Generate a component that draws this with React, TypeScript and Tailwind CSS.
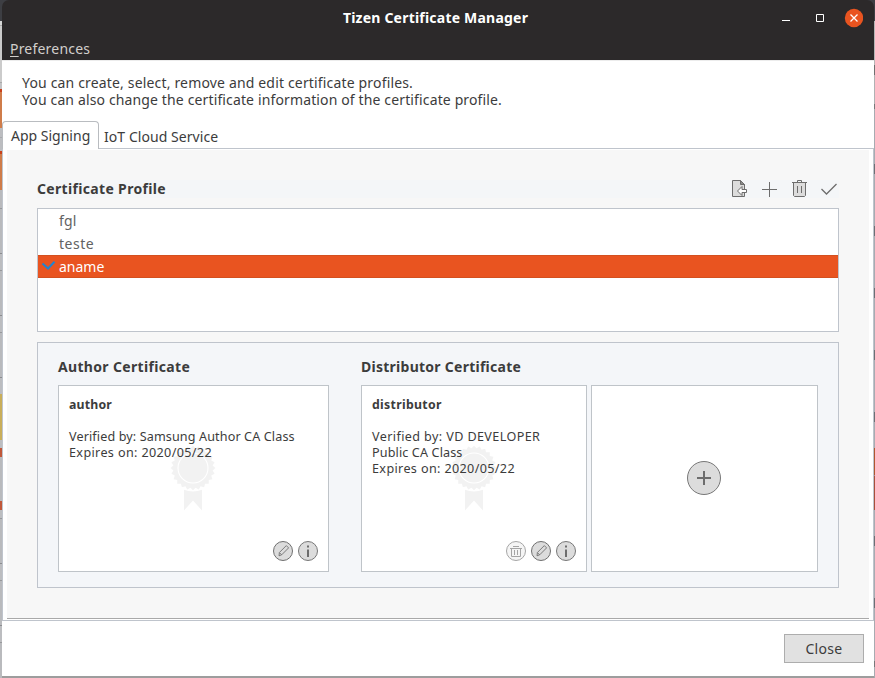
import React from "react";

const leftStrip = [
  { h: 21, c: "bg-[#3d3e43]" },
  { h: 4, c: "bg-[#d6d6d6]" },
  { h: 1, c: "bg-[#a9a9a9]" },
  { h: 56, c: "bg-[#cbcbcb]" },
  { h: 1, c: "bg-[#a9a9a9]" },
  { h: 6, c: "bg-[#c3c3c5]" },
  { h: 3, c: "bg-[#c9421c]" },
  { h: 36, c: "bg-[#cf7c4a]" },
  { h: 9, c: "bg-[#bcbdc0]" },
  { h: 1, c: "bg-[#a8a9ac]" },
  { h: 13, c: "bg-[#bcbdc0]" },
  { h: 3, c: "bg-[#c9421c]" },
  { h: 36, c: "bg-[#cf7c4a]" },
  { h: 18, c: "bg-[#b9babd]" },
  { h: 1, c: "bg-[#98999c]" },
  { h: 44, c: "bg-[#b9babd]" },
  { h: 1, c: "bg-[#8c8d90]" },
  { h: 16, c: "bg-[#bcbdc0]" },
  { h: 1, c: "bg-[#98999c]" },
  { h: 44, c: "bg-[#b9babd]" },
  { h: 1, c: "bg-[#8c8d90]" },
  { h: 16, c: "bg-[#bcbdc0]" },
  { h: 1, c: "bg-[#98999c]" },
  { h: 44, c: "bg-[#b9babd]" },
  { h: 1, c: "bg-[#8c8d90]" },
  { h: 16, c: "bg-[#bcbdc0]" },
  { h: 46, c: "bg-[#c9ae5a]" },
  { h: 8, c: "bg-[#bcbdc0]" },
  { h: 9, c: "bg-[#c0583a]" },
  { h: 44, c: "bg-[#b9babd]" },
  { h: 9, c: "bg-[#c0583a]" },
  { h: 8, c: "bg-[#bcbdc0]" },
  { h: 1, c: "bg-[#98999c]" },
  { h: 44, c: "bg-[#b9babd]" },
  { h: 1, c: "bg-[#8c8d90]" },
  { h: 16, c: "bg-[#bcbdc0]" },
  { h: 1, c: "bg-[#98999c]" },
  { h: 44, c: "bg-[#b9babd]" },
  { h: 1, c: "bg-[#8c8d90]" },
  { h: 16, c: "bg-[#bcbdc0]" },
  { h: 1, c: "bg-[#98999c]" },
  { h: 40, c: "bg-[#b9babd]" },
];

const rightStrip = [
  { h: 21, c: "bg-[#3d3e43]" },
  { h: 44, c: "bg-[#b5b5b5]" },
  { h: 10, c: "bg-[#6f6f70]" },
  { h: 29, c: "bg-[#b0b1b3]" },
  { h: 5, c: "bg-[#77787a]" },
  { h: 55, c: "bg-[#a7abb1]" },
  { h: 10, c: "bg-[#6c6f74]" },
  { h: 52, c: "bg-[#a7abb1]" },
  { h: 10, c: "bg-[#6c6f74]" },
  { h: 52, c: "bg-[#a7abb1]" },
  { h: 10, c: "bg-[#6c6f74]" },
  { h: 52, c: "bg-[#a7abb1]" },
  { h: 10, c: "bg-[#6c6f74]" },
  { h: 52, c: "bg-[#a7abb1]" },
  { h: 10, c: "bg-[#6c6f74]" },
  { h: 26, c: "bg-[#a7abb1]" },
  { h: 27, c: "bg-[#b0562f]" },
  { h: 1, c: "bg-[#b08a90]" },
  { h: 34, c: "bg-[#a84f3a]" },
  { h: 26, c: "bg-[#a7abb1]" },
  { h: 10, c: "bg-[#6c6f74]" },
  { h: 52, c: "bg-[#a7abb1]" },
  { h: 10, c: "bg-[#6c6f74]" },
  { h: 53, c: "bg-[#a7abb1]" },
  { h: 6, c: "bg-[#77787a]" },
  { h: 11, c: "bg-[#a7abb1]" },
];

function Strip({ parts, className }: { parts: { h: number; c: string }[]; className: string }) {
  return (
    <div className={`flex h-full shrink-0 flex-col overflow-hidden ${className}`}>
      {parts.map((p, i) => (
        <div key={i} className={`shrink-0 ${p.c}`} style={{ height: p.h }} />
      ))}
    </div>
  );
}

function ImportIcon() {
  return (
    <svg width="17" height="18" viewBox="0 0 17 18" fill="none" stroke="#6d6d6d">
      <path d="M.5.5h8l4 4v12H.5z" fill="#dcdcdc" />
      <path d="M8.500.5v4h4z" fill="#8a8a8a" />
      <path d="M5.500 11l4.500-4.500v3h4.500v3H10v3z" fill="#fff" />
    </svg>
  );
}

function PlusIcon() {
  return (
    <svg width="17" height="17" viewBox="0 0 17 17" stroke="#6d6d6d">
      <path d="M0 8.500h15M7.500 1v15" />
    </svg>
  );
}

function TrashIcon() {
  return (
    <svg width="17" height="18" viewBox="0 0 17 18" fill="none" stroke="#6d6d6d">
      <path d="M1.500 2.500h12v13l-1 1h-10l-1-1z" fill="#dcdcdc" />
      <path d="M0 2.500h15M5.500 2V.5h4V2M5.500 6v7M9.500 6v7" />
    </svg>
  );
}

function CheckIcon() {
  return (
    <svg width="17" height="14" viewBox="0 0 17 14" fill="none" stroke="#6d6d6d" strokeWidth="1.300">
      <path d="M.5 7l5 5L15.500 2" />
    </svg>
  );
}

function RoundPencil() {
  return (
    <svg width="20" height="20" viewBox="0 0 20 20" fill="none" stroke="#6f6f6f">
      <circle cx="10" cy="10" r="9.500" fill="#dcdcdc" />
      <path d="M6 14.800l.4-3.300 6.900-6.900 2.300 2.300-6.900 6.900zM6.600 11.800l2 2" strokeWidth=".9" />
    </svg>
  );
}

function RoundInfo() {
  return (
    <svg width="20" height="20" viewBox="0 0 20 20">
      <circle cx="10" cy="10" r="9.500" fill="#dcdcdc" stroke="#777" />
      <path d="M9 4.500h2v2H9zM9 8.500h2v7.500H9z" fill="#6d6d6d" />
    </svg>
  );
}

function RoundTrash() {
  return (
    <svg width="20" height="20" viewBox="0 0 20 20" fill="none" stroke="#a5a5a5">
      <circle cx="10" cy="10" r="9.500" fill="#f5f5f5" />
      <path d="M4 7.500h12M7 5.500h6M5.500 7.500v8h9v-8M8.500 9v5M11.500 9v5" />
    </svg>
  );
}

const scallops = Array.from({ length: 48 }, (_, i) => {
  const r = i % 2 ? 19.8 : 22.3;
  const a = (i * Math.PI) / 24;
  return `${(23 + r * Math.cos(a)).toFixed(2)},${(23 + r * Math.sin(a)).toFixed(2)}`;
}).join(" ");

function Ribbon({ className }: { className: string }) {
  return (
    <svg className={`absolute ${className}`} width="46" height="66" viewBox="0 0 46 66">
      <path d="M14 43h18v22.500l-9-10-9 10z" fill="#f2f2f2" />
      <circle cx="23" cy="23" r="23.500" fill="#fff" />
      <polygon points={scallops} fill="#f2f2f2" />
      <circle cx="23" cy="23" r="15" fill="none" stroke="#fff" strokeWidth="1.100" />
    </svg>
  );
}

export default function App() {
  return (
    <div className="flex h-[678px] w-[875px] overflow-hidden bg-[#c4c4c4] font-['Noto_Sans',sans-serif] text-[14px] text-[#3c3c3c]">
      <Strip parts={leftStrip} className="w-[2px]" />
      <div className="flex h-[678px] w-[872px] shrink-0 flex-col bg-[#9d9d9d]">
        <div className="bg-[#3d3e43]">
          <header className="flex h-[60px] flex-col rounded-t-[7px] bg-[#2c292a]">
            <div className="flex h-9 items-center justify-end pr-[11px]">
              <div className="w-[74px] shrink-0" />
              <h1 className="flex-1 pl-[14px] text-center text-[14px] font-bold leading-[20px] tracking-[0.210px] text-white">
                <span className="whitespace-nowrap">Tizen Certificate Manager</span>
              </h1>
              <svg width="82" height="20" viewBox="0 0 82 20" fill="none">
                <path d="M1 12.500h8" stroke="#fff" />
                <path d="M35.500 6.500h7v7h-7z" stroke="#fff" />
                <circle cx="73" cy="10" r="9.200" fill="#e95420" />
                <path d="M69.500 6.500l7 7M76.500 6.500l-7 7" stroke="#fff" strokeWidth="1.300" />
              </svg>
            </div>
            <nav className="flex h-6 items-center pl-2 pt-0.5 leading-[24px] tracking-[0.200px] text-[#d2cfcc]">
              <span><span className="underline underline-offset-2">P</span>references</span>
            </nav>
          </header>
        </div>
        <main className="flex h-[616px] flex-col border-t border-[#ececec] bg-white">
          <div className="h-[60px] whitespace-nowrap pl-5 pt-[13px] leading-[17px]">
            <p className="tracking-[0.165px]">You can create, select, remove and edit certificate profiles.</p>
            <p className="tracking-[0.135px]">You can also change the certificate information of the certificate profile.</p>
          </div>
          <div className="flex h-[27px] whitespace-nowrap">
            <div className="z-10 h-7 w-[97px] rounded-t-[4px] border border-b-0 border-[#b9bcc0] bg-white pl-2 leading-[27px]">App Signing</div>
            <div className="pl-[5px] leading-[31px] tracking-[0.060px]">IoT Cloud Service</div>
          </div>
          <div className="h-[473px] border border-[#bfc4cc] px-1 pt-px">
            <section className="h-[469px] border-b border-[#a9a9a9] bg-[#f7f7f7] px-[30px] pt-[30px]">
              <div className="flex h-[18px] items-center bg-[#f4f6f8]">
                <h2 className="flex-1 font-bold leading-[18px] tracking-[0.330px]">Certificate Profile</h2>
                <div className="flex w-[107px] items-center">
                  <div className="w-[30px]"><ImportIcon /></div>
                  <div className="w-[30px]"><PlusIcon /></div>
                  <div className="w-[29px]"><TrashIcon /></div>
                  <CheckIcon />
                </div>
              </div>
              <ul className="mt-[10px] h-[124px] border border-[#bfc4cc] bg-white text-[#626262]">
                <li className="h-[23px] pl-[21px] leading-[24px] tracking-[0.200px]">fgl</li>
                <li className="h-[23px] pl-[21px] leading-[24px] tracking-[0.500px]">teste</li>
                <li className="flex h-[23px] border-y border-[#d3501f] bg-[#e95420] pl-[3px] leading-[22px] text-white">
                  <svg className="mt-1" width="18" height="13" viewBox="0 0 18 13" fill="none" stroke="#2184d0" strokeWidth="2">
                    <path d="M1.500 3.500L7 8.500 13.500 1.800" />
                  </svg>
                  aname
                </li>
              </ul>
              <div className="mt-[10px] flex h-[246px] border border-[#bfc4cc] bg-[#f4f6f9] pl-5 pt-[14px]">
                <div className="w-[303px]">
                  <h2 className="h-7 font-bold leading-[20px] tracking-[0.330px]">Author Certificate</h2>
                  <div className="relative flex h-[187px] w-[271px] flex-col border border-[#bfc4c9] bg-white px-[10px] pb-[10px] pt-[10px] text-[12.600px] leading-4">
                    <Ribbon className="left-[111px] top-[59px]" />
                    <h3 className="relative h-[33px] text-[12.300px] font-bold leading-[17px] tracking-[0.200px]">author</h3>
                    <p className="relative whitespace-nowrap tracking-[0.120px]">Verified by: Samsung Author CA Class</p>
                    <p className="relative whitespace-nowrap tracking-[0.360px]">Expires on: 2020/05/22</p>
                    <div className="mt-auto flex justify-end gap-[5px]"><RoundPencil /><RoundInfo /></div>
                  </div>
                </div>
                <div>
                  <h2 className="h-7 font-bold leading-[20px] tracking-[0.260px]">Distributor Certificate</h2>
                  <div className="flex gap-1">
                    <div className="relative flex h-[187px] w-[226px] flex-col border border-[#bfc4c9] bg-white px-[10px] pb-[10px] pt-[10px] text-[12.600px] leading-4">
                      <Ribbon className="left-[89px] top-[59px]" />
                      <h3 className="relative h-[33px] text-[12.300px] font-bold leading-[17px] tracking-[0.300px]">distributor</h3>
                      <p className="relative whitespace-nowrap tracking-[0.390px]">Verified by: VD DEVELOPER</p>
                      <p className="relative whitespace-nowrap tracking-[0.130px]">Public CA Class</p>
                      <p className="relative whitespace-nowrap tracking-[0.360px]">Expires on: 2020/05/22</p>
                      <div className="mt-auto flex justify-end gap-[5px]"><RoundTrash /><RoundPencil /><RoundInfo /></div>
                    </div>
                    <div className="flex h-[187px] w-[227px] items-center justify-center border border-[#bfc4c9] bg-white pb-[2px] pr-px">
                      <svg width="34" height="34" viewBox="0 0 34 34">
                        <circle cx="17" cy="17" r="16.500" fill="#dcdcdc" stroke="#777" />
                        <path d="M10 17h14M17 10v14" stroke="#6d6d6d" strokeWidth="2" />
                      </svg>
                    </div>
                  </div>
                </div>
              </div>
            </section>
          </div>
          <div className="flex flex-1 justify-end pr-[10px] pt-[13px]">
            <button className="h-[29px] w-20 border border-[#adadad] bg-[#e1e1e1] leading-[27px] tracking-[0.300px]">Close</button>
          </div>
        </main>
      </div>
      <Strip parts={rightStrip} className="w-px" />
    </div>
  );
}
